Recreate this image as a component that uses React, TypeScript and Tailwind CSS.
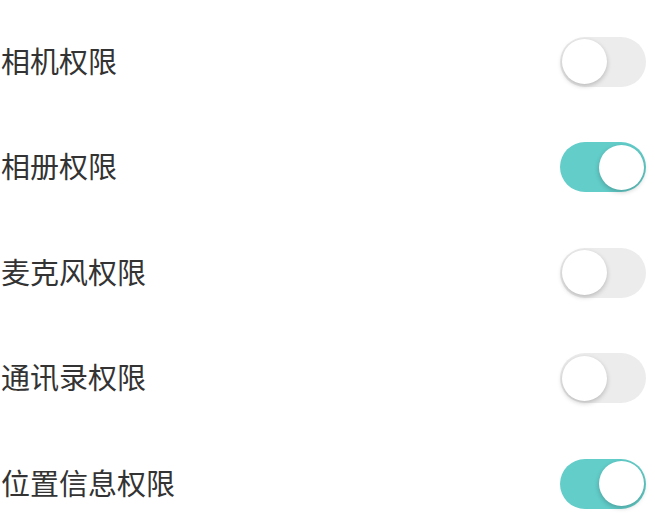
import React from 'react';

const items: { label: string; on: boolean }[] = [
  { label: '相机权限', on: false },
  { label: '相册权限', on: true },
  { label: '麦克风权限', on: false },
  { label: '通讯录权限', on: false },
  { label: '位置信息权限', on: true },
];

function Toggle({ on }: { on: boolean }) {
  return (
    <div
      className={
        on
          ? 'relative w-[86px] h-[50px] rounded-full bg-[#62cdc9] flex items-center justify-end px-[2px]'
          : 'relative w-[86px] h-[50px] rounded-full bg-[#ececec] flex items-center justify-start px-[2px]'
      }
    >
      <div className="w-[45px] h-[45px] rounded-full bg-white shadow-[0_2px_5px_rgba(0,0,0,0.22)]" />
    </div>
  );
}

export default function App() {
  return (
    <div className="w-[655px] h-[516px] bg-white pt-[9px] font-['Noto_Sans_CJK_SC',sans-serif] overflow-hidden">
      {items.map((it) => (
        <div key={it.label} className="h-[105.5px] flex items-center justify-between pl-[1px] pr-[9px]">
          <span className="text-[29px] leading-none text-[#333333] -mt-[3px]">{it.label}</span>
          <Toggle on={it.on} />
        </div>
      ))}
    </div>
  );
}
